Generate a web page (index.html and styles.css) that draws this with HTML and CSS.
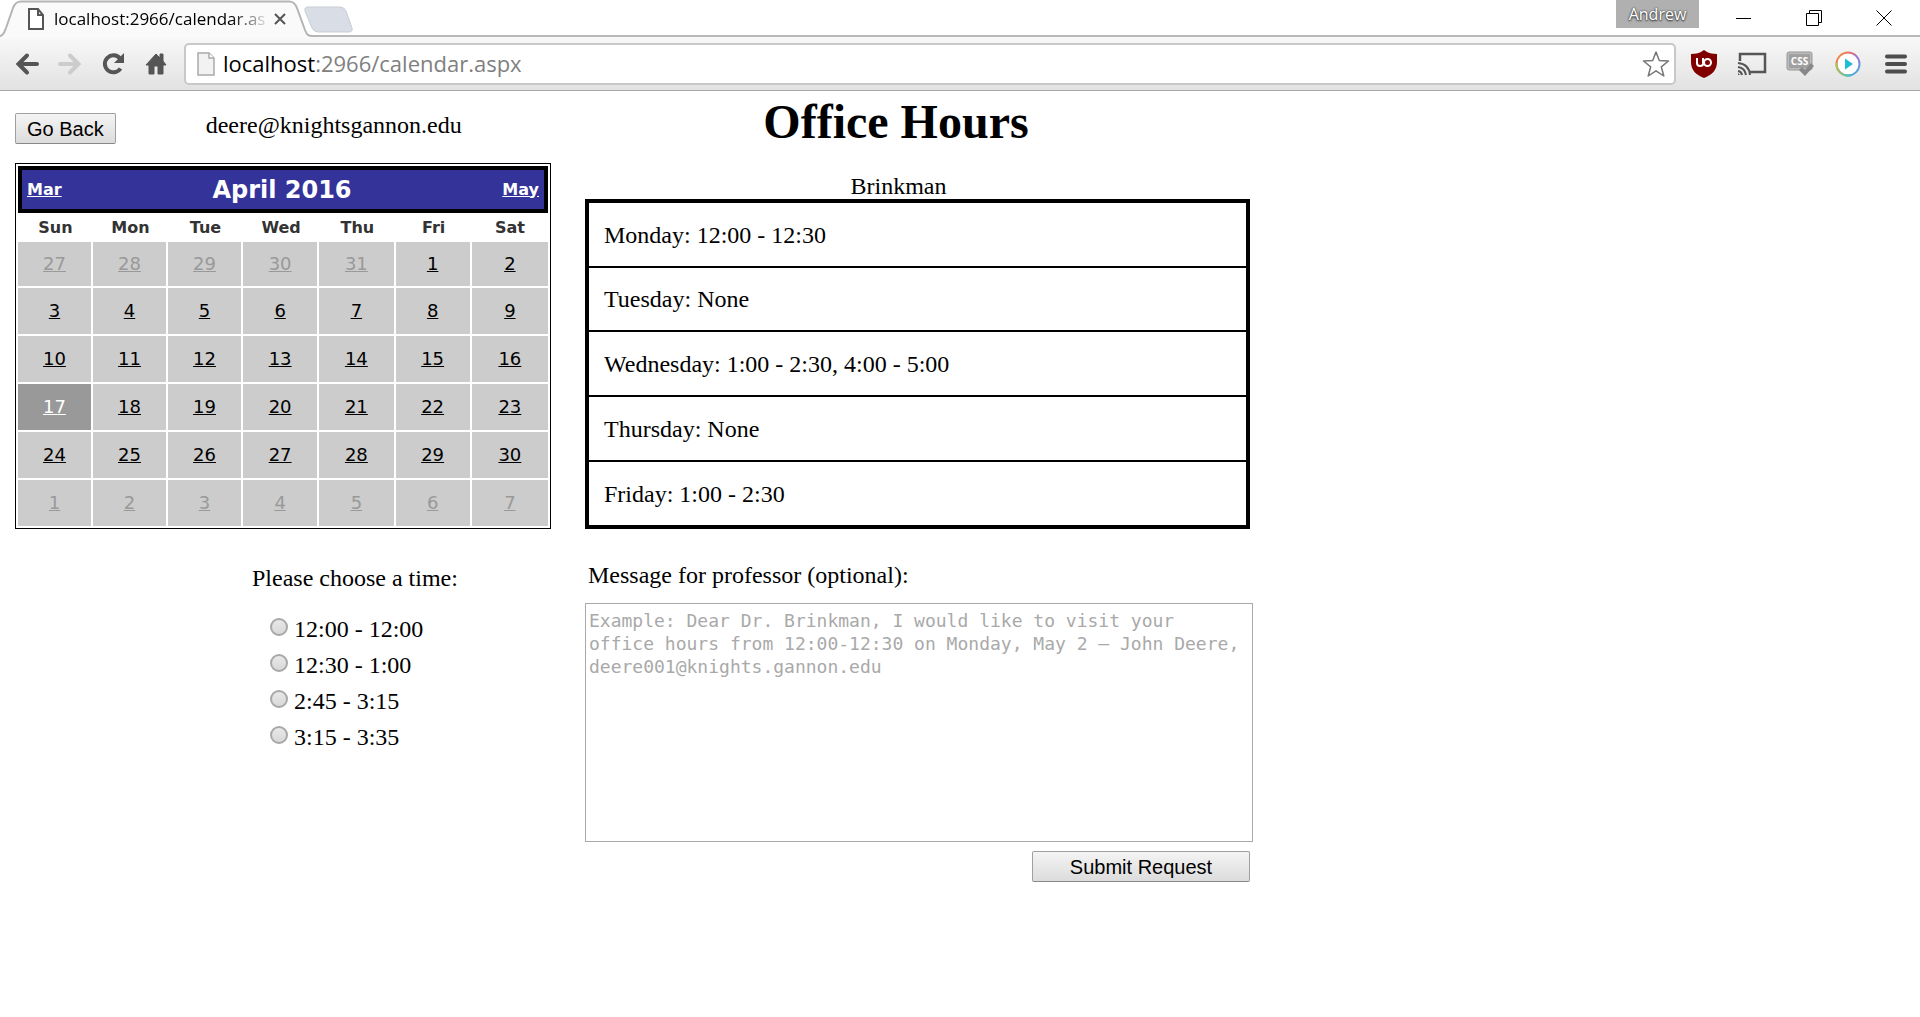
FILE: index.html
```html
<!DOCTYPE html>
<html lang="en">
<head>
<meta charset="utf-8">
<title>Office Hours</title>
<link rel="stylesheet" href="styles.css">
</head>
<body>
<header class="browser">
  <div class="tabstrip">
    <div class="tab">
      <svg class="tab-shape" width="316" height="38" viewBox="0 0 316 38" aria-hidden="true">
        <path d="M-2 36.500C3 36 4 33 6 28L13 8C15 3 17 1.500 21 1.500H289C293 1.500 295 3 297 8L305 30C307 35 308 36.500 313 36.500V38H-2z" fill="#fafafa"/>
        <path d="M-2 36.500C3 36 4 33 6 28L13 8C15 3 17 1.500 21 1.500H289C293 1.500 295 3 297 8L305 30C307 35 308 36 313 36H316" fill="none" stroke="#b4b4b4" stroke-width="2"/>
      </svg>
      <svg class="tab-doc" width="16" height="22" viewBox="0 0 16 22" aria-hidden="true"><path d="M1 1H10L15 7V21H1zM10 1V7H15" fill="#fff" stroke="#555" stroke-width="2"/></svg>
      <span class="tab-title">localhost:2966/calendar.as</span>
      <button class="tab-close" type="button" aria-label="Close tab"><svg width="12" height="12" viewBox="0 0 12 12"><path d="M1 1L11 11M11 1L1 11" stroke="#555" stroke-width="2"/></svg></button>
    </div>
    <button class="new-tab" type="button" aria-label="New tab"><svg width="50" height="28" viewBox="0 0 50 28"><path d="M4 1H36Q40 1 42 5L48 22Q49 26 45 26H14Q10 26 8 22L1 5Q0 1 4 1z" fill="#d8dde6" stroke="#c9cdd4"/></svg></button>
    <div class="window-controls">
      <button class="profile" type="button">Andrew</button>
      <button class="win-button" type="button" aria-label="Minimize"><svg width="16" height="16" viewBox="0 0 16 16"><path d="M0 8.500H15" stroke="#000"/></svg></button>
      <button class="win-button" type="button" aria-label="Restore"><svg width="16" height="16" viewBox="0 0 16 16"><path d="M.5 3.500H12.500V15.500H.5zM3.500 3V.5H15.500V12.500H13" fill="none" stroke="#000"/></svg></button>
      <button class="win-button" type="button" aria-label="Close"><svg width="16" height="16" viewBox="0 0 16 16"><path d="M.5 .5L15.500 15.500M15.500 .5L.5 15.500" stroke="#000"/></svg></button>
    </div>
  </div>
  <div class="toolbar">
    <nav class="nav-buttons">
      <button class="nav-button" type="button" aria-label="Back"><svg width="26" height="24" viewBox="0 0 26 24"><path d="M23 12H6M13 3.500L4.500 12L13 20.500" fill="none" stroke="#555" stroke-width="4" stroke-linecap="round"/></svg></button>
      <button class="nav-button" type="button" aria-label="Forward"><svg width="26" height="24" viewBox="0 0 26 24"><path d="M3 12H20M13 3.500L21.500 12L13 20.500" fill="none" stroke="#ccc" stroke-width="4" stroke-linecap="round"/></svg></button>
      <button class="nav-button" type="button" aria-label="Reload"><svg width="26" height="24" viewBox="0 0 26 24"><path d="M20 6.500A8.500 8.500 0 1 0 20.500 16.500" fill="none" stroke="#555" stroke-width="4"/><path d="M24 1V11H14z" fill="#555"/></svg></button>
      <button class="nav-button" type="button" aria-label="Home"><svg width="24" height="24" viewBox="0 0 24 24"><path d="M12 2L16 6V2H19V9L22 13H19V22H14V14H10V22H5V13H2z" fill="#555" stroke="#555" stroke-linejoin="round"/></svg></button>
    </nav>
    <div class="omnibox">
      <svg width="18" height="24" viewBox="0 0 18 24" aria-hidden="true"><path d="M1 1H12L17 6V23H1z" fill="#f2f2f2" stroke="#aaa" stroke-width="1.500"/><path d="M12 1V6H17" fill="#fff" stroke="#aaa" stroke-width="1.500"/></svg>
      <span class="url"><span class="url-host">localhost</span>:2966/calendar.aspx</span>
      <button class="star" type="button" aria-label="Bookmark this page"><svg width="28" height="28" viewBox="0 0 28 28"><path d="M14 2L17.300 10.500L26.500 11L19.300 16.800L21.800 26L14 20.800L6.200 26L8.700 16.800L1.500 11L10.700 10.500z" fill="#fff" stroke="#777" stroke-width="1.500" stroke-linejoin="round"/></svg></button>
    </div>
    <div class="extensions">
      <button class="extension" type="button" aria-label="uBlock Origin"><svg width="28" height="30" viewBox="0 0 28 30"><path d="M14 1C10 4 6 5 1 5V13C1 21 6 26 14 29C22 26 27 21 27 13V5C22 5 18 4 14 1z" fill="#800000"/><path d="M7 9V14Q7 17 10 17Q13 17 13.500 14M13 9V14" fill="none" stroke="#fff" stroke-width="2"/><circle cx="17.500" cy="13.500" r="3.500" fill="none" stroke="#fff" stroke-width="2"/></svg></button>
      <button class="extension" type="button" aria-label="Cast"><svg width="32" height="26" viewBox="0 0 32 26"><path d="M4 10V3H29V21H14" fill="none" stroke="#555" stroke-width="2.500"/><path d="M2 20Q5.500 20.500 6 24M2 16Q9 17 10 24M2 12Q13 13 14 24" fill="none" stroke="#555" stroke-width="2"/><path d="M2 22L4 24H2z" fill="#555"/></svg></button>
      <button class="extension" type="button" aria-label="CSS Validator"><svg width="30" height="28" viewBox="0 0 30 28"><rect x="2" y="2" width="25" height="18" rx="2" fill="#bbb" stroke="#999"/><rect x="4" y="4" width="21" height="14" fill="#a0a0a0"/><text x="14.500" y="15" class="css-mark">CSS</text><path d="M14 20L17 17L20 20L26 13L29 16L20 26z" fill="#888"/></svg></button>
      <button class="extension" type="button" aria-label="Play"><svg width="28" height="28" viewBox="0 0 28 28"><defs><linearGradient id="ring" x1="0" y1="0" x2="1" y2="1"><stop offset="0" stop-color="#f0a030"/><stop offset=".3" stop-color="#e87070"/><stop offset=".55" stop-color="#a070d8"/><stop offset="1" stop-color="#35bfd8"/></linearGradient><linearGradient id="lower" x1="0" y1="0" x2="1" y2="0"><stop offset="0" stop-color="#a8c94a"/><stop offset="1" stop-color="#35bfd8"/></linearGradient></defs><circle cx="14" cy="14" r="11.500" fill="#fff" stroke="url(#ring)" stroke-width="2"/><path d="M2.500 13A11.500 11.500 0 0 0 18 24.800" fill="none" stroke="url(#lower)" stroke-width="2"/><path d="M11 8.500L19 14L11 19.500z" fill="#1fbbd8"/></svg></button>
      <button class="extension" type="button" aria-label="Menu"><svg width="24" height="22" viewBox="0 0 24 22"><path d="M3 3.500H21M3 11H21M3 18.500H21" stroke="#4d4d4d" stroke-width="4" stroke-linecap="round"/></svg></button>
    </div>
  </div>
</header>

<main class="page">
  <div class="account">
    <button class="button" type="button">Go Back</button>
    <span>deere@knightsgannon.edu</span>
  </div>
  <h1 class="title">Office Hours</h1>

  <div class="calendar">
    <div class="calendar-title">
      <a href="#mar">Mar</a>
      <span class="month">April 2016</span>
      <a href="#may">May</a>
    </div>
    <table class="days">
      <thead>
        <tr><th>Sun</th><th>Mon</th><th>Tue</th><th>Wed</th><th>Thu</th><th>Fri</th><th>Sat</th></tr>
      </thead>
      <tbody>
        <tr><td class="other"><a href="#d">27</a></td><td class="other"><a href="#d">28</a></td><td class="other"><a href="#d">29</a></td><td class="other"><a href="#d">30</a></td><td class="other"><a href="#d">31</a></td><td><a href="#d">1</a></td><td><a href="#d">2</a></td></tr>
        <tr><td><a href="#d">3</a></td><td><a href="#d">4</a></td><td><a href="#d">5</a></td><td><a href="#d">6</a></td><td><a href="#d">7</a></td><td><a href="#d">8</a></td><td><a href="#d">9</a></td></tr>
        <tr><td><a href="#d">10</a></td><td><a href="#d">11</a></td><td><a href="#d">12</a></td><td><a href="#d">13</a></td><td><a href="#d">14</a></td><td><a href="#d">15</a></td><td><a href="#d">16</a></td></tr>
        <tr><td class="today"><a href="#d">17</a></td><td><a href="#d">18</a></td><td><a href="#d">19</a></td><td><a href="#d">20</a></td><td><a href="#d">21</a></td><td><a href="#d">22</a></td><td><a href="#d">23</a></td></tr>
        <tr><td><a href="#d">24</a></td><td><a href="#d">25</a></td><td><a href="#d">26</a></td><td><a href="#d">27</a></td><td><a href="#d">28</a></td><td><a href="#d">29</a></td><td><a href="#d">30</a></td></tr>
        <tr><td class="other"><a href="#d">1</a></td><td class="other"><a href="#d">2</a></td><td class="other"><a href="#d">3</a></td><td class="other"><a href="#d">4</a></td><td class="other"><a href="#d">5</a></td><td class="other"><a href="#d">6</a></td><td class="other"><a href="#d">7</a></td></tr>
      </tbody>
    </table>
  </div>

  <table class="hours">
    <caption>Brinkman</caption>
    <tbody>
      <tr><td>Monday: 12:00 - 12:30</td></tr>
      <tr><td>Tuesday: None</td></tr>
      <tr><td>Wednesday: 1:00 - 2:30, 4:00 - 5:00</td></tr>
      <tr><td>Thursday: None</td></tr>
      <tr><td>Friday: 1:00 - 2:30</td></tr>
    </tbody>
  </table>

  <fieldset class="times">
    <legend>Please choose a time:</legend>
    <label><input type="radio" name="time">12:00 - 12:00</label>
    <label><input type="radio" name="time">12:30 - 1:00</label>
    <label><input type="radio" name="time">2:45 - 3:15</label>
    <label><input type="radio" name="time">3:15 - 3:35</label>
  </fieldset>

  <form class="message">
    <label for="message">Message for professor (optional):</label>
    <textarea id="message" placeholder="Example: Dear Dr. Brinkman, I would like to visit your office hours from 12:00-12:30 on Monday, May 2 – John Deere, deere001@knights.gannon.edu"></textarea>
    <button class="button submit" type="button">Submit Request</button>
  </form>
</main>
</body>
</html>
```
FILE: styles.css
```css
* { box-sizing: border-box; }

body {
  margin: 0;
  background: #fff;
  color: #000;
  font: 24px/28px "Liberation Serif", "Times New Roman", serif;
}

button { font: inherit; cursor: pointer; }

/* Browser frame */
.browser { font-family: "Open Sans", "Segoe UI", sans-serif; }

.browser button {
  display: flex;
  align-items: center;
  justify-content: center;
  padding: 0;
  border: 0;
  background: none;
}

.tabstrip {
  display: flex;
  height: 37px;
  border-bottom: 2px solid #b8b8b8;
}

.tab {
  position: relative;
  display: flex;
  align-items: center;
  width: 304px;
  height: 37px;
  padding: 0 18px 0 28px;
}

.tab-shape { position: absolute; left: 0; top: 0; }
.tab-doc, .tab-title, .tab-close { position: relative; flex: none; }

.tab-title {
  flex: 1;
  margin: 0 4px 0 10px;
  white-space: nowrap;
  font-size: 17px;
  -webkit-mask-image: linear-gradient(to right, #000 82%, transparent);
  mask-image: linear-gradient(to right, #000 82%, transparent);
}

.new-tab { height: 39px; }

.window-controls {
  display: flex;
  align-items: flex-start;
  margin-left: auto;
  padding-right: 1px;
}

.browser .profile {
  width: 83px;
  height: 28px;
  margin-right: 10px;
  background: #b0b0b0;
  color: #fff;
  font-size: 16px;
  text-shadow: 0 0 2px #333, 0 1px 2px #333;
}

.win-button { width: 70px; height: 36px; }

.toolbar {
  display: flex;
  align-items: center;
  height: 54px;
  padding: 0 0 0 5px;
  border-bottom: 1px solid #a8a8a8;
  background: linear-gradient(#f8f8f8, #e2e2e2);
}

.nav-buttons, .extensions { display: flex; }
.nav-button { width: 43px; height: 40px; }
.extension { width: 48px; height: 40px; }

.omnibox {
  display: flex;
  flex: 1;
  align-items: center;
  gap: 8px;
  height: 42px;
  margin: 0 4px 0 7px;
  padding: 0 4px 0 11px;
  border: 2px solid #c8c8c8;
  border-radius: 5px;
  background: #fff;
}

.url { padding-bottom: 2px; color: #808080; font-size: 22px; }
.url-host { color: #000; }
.star { margin-left: auto; }

.css-mark {
  fill: #fff;
  font: bold 10px "Open Sans", sans-serif;
  text-anchor: middle;
}

/* Page */
.page {
  display: grid;
  grid-template-columns: minmax(0, 536px) minmax(0, 668px);
  column-gap: 34px;
  padding: 2px 15px 0;
}

.account {
  display: flex;
  align-items: flex-start;
  gap: 90px;
  padding-top: 18px;
}

.title {
  margin: 0;
  padding-right: 46px;
  font-size: 48px;
  line-height: 58px;
  text-align: center;
}

.button {
  height: 31px;
  padding: 0 11px;
  border: 1px solid #a0a0a0;
  border-bottom-color: #888;
  border-radius: 2px;
  background: linear-gradient(#f4f4f4, #dcdcdc);
  color: #000;
  font: 20px/28px "Liberation Sans", Arial, sans-serif;
}

.account .button { margin-top: 2px; }

.calendar {
  align-self: end;
  padding: 2px;
  border: 1px solid #000;
  font-family: "DejaVu Sans", Verdana, sans-serif;
}

.calendar a { color: inherit; }

.calendar-title {
  display: flex;
  align-items: center;
  justify-content: space-between;
  height: 47px;
  padding: 0 5px;
  border: 4px solid #000;
  background: #333399;
  color: #fff;
  font-size: 16px;
  font-weight: bold;
}

.month { font-size: 24px; }

.days {
  width: 100%;
  border-spacing: 0;
  table-layout: fixed;
  text-align: center;
}

.days th {
  height: 29px;
  padding: 0;
  color: #333;
  font-size: 16px;
}

.days th:nth-child(-n+3) { width: 75px; }

.days td {
  height: 48px;
  padding: 0;
  border: solid #fff;
  border-width: 0 2px 2px 0;
  background: #ccc;
  font-size: 18px;
}

.days td:last-child { border-right: 0; }
.days tr:last-child td { border-bottom: 0; }
.days tbody tr:first-child td, .days tr:last-child td { height: 46px; }
.days .other { color: #999; }
.days .today { background: #999; color: #fff; }

.hours {
  width: calc(100% - 3px);
  margin-top: 22px;
  border: 4px solid #000;
  border-spacing: 0;
}

.hours caption { padding-right: 38px; line-height: 26px; }

.hours td {
  height: 65px;
  padding: 0 15px;
  border-bottom: 2px solid #000;
}

.hours tr:nth-child(2) td { height: 64px; }
.hours tr:last-child td { border-bottom: 0; height: 63px; }

.times {
  display: flex;
  flex-direction: column;
  margin: 35px 0 0 237px;
  padding: 0;
  border: 0;
}

.times legend { padding: 0; margin-bottom: 19px; }

.times label {
  display: flex;
  align-items: center;
  gap: 6px;
  height: 36px;
  padding-left: 18px;
}

.times input {
  appearance: none;
  width: 18px;
  height: 18px;
  margin: 0 0 5px;
  border: 2px solid #a8a8a8;
  border-radius: 50%;
  background: linear-gradient(#e8e8e8, #d8d8d8);
}

.message {
  display: flex;
  flex-direction: column;
  margin-top: 32px;
}

.message label { padding-left: 3px; }

.message textarea {
  height: 239px;
  margin-top: 14px;
  padding: 5px 3px;
  border: 1px solid #a9a9a9;
  resize: none;
  font: 18px/23px "DejaVu Sans Mono", Consolas, monospace;
}

.message textarea::placeholder { color: #a9a9a9; opacity: 1; }

.submit {
  align-self: flex-end;
  width: 218px;
  margin: 9px 3px 0 0;
}
```
